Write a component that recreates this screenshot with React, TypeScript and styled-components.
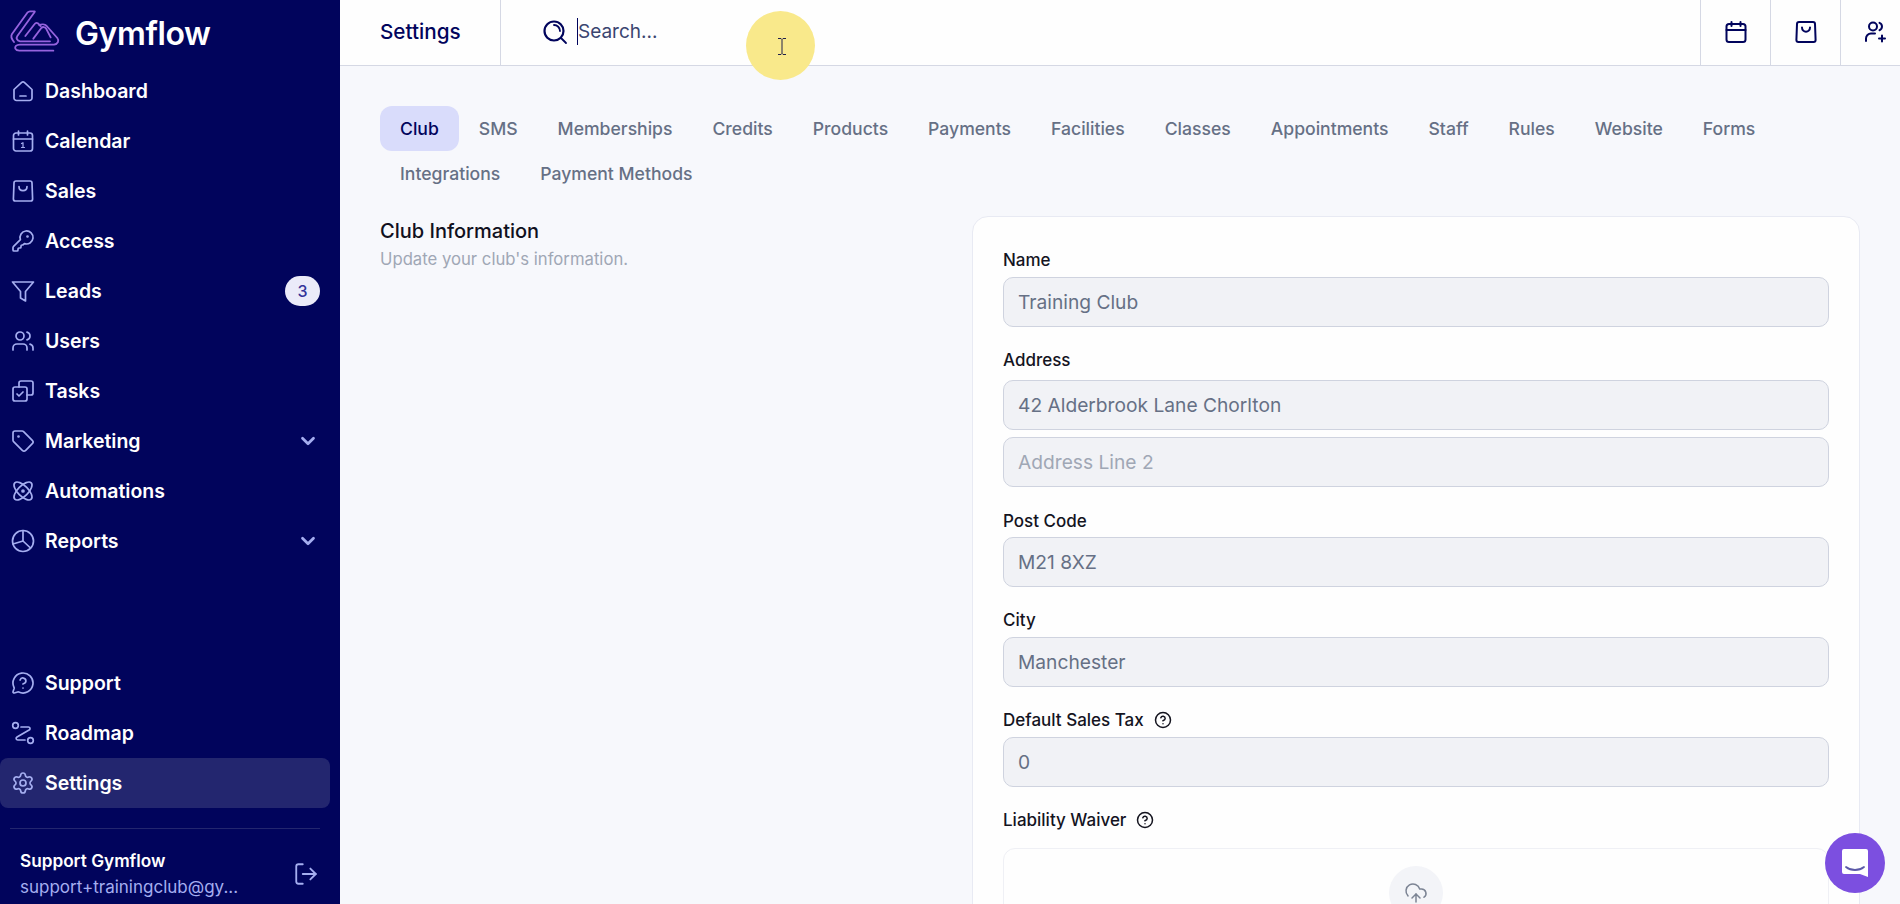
import React, { FC, ReactNode } from 'react'
import styled, { createGlobalStyle } from 'styled-components'
import {
  Atom,
  ChevronDown,
  CircleHelp,
  CloudUpload,
  KeyRound,
  LogOut,
  MessageCircleQuestion,
  Settings,
  Tag,
  Users,
} from 'lucide-react'

const NAVY = '#01045c'
const ICON_BLUE = '#a5aef0'

const GlobalStyle = createGlobalStyle`
  html, body {
    margin: 0;
    height: 100%;
    overflow: hidden;
    background: #f7f8fc;
    font-family: Inter, "Liberation Sans", sans-serif;
  }
  * { box-sizing: border-box; }
`

const Layout = styled.div`
  display: flex;
  width: 1900px;
  height: 904px;
  overflow: hidden;
  position: relative;
`

const Sidebar = styled.aside`
  width: 340px;
  flex-shrink: 0;
  display: flex;
  flex-direction: column;
  background: ${NAVY};
  color: #fff;
`

const Brand = styled.div`
  height: 66px;
  display: flex;
  align-items: center;
  font-size: 32px;
  font-weight: 600;
  letter-spacing: -0.4px;
`

const Nav = styled.nav<{ $grow?: boolean }>`
  width: 330px;
  display: flex;
  flex-direction: column;
  flex: ${props => (props.$grow ? 1 : '0 0 auto')};
`

const NavRow = styled.div<{ $active?: boolean }>`
  height: 50px;
  display: flex;
  align-items: center;
  gap: 10px;
  padding: 0 10px 0 11px;
  border-radius: 8px;
  font-size: 19.5px;
  font-weight: 600;
  background: ${props => (props.$active ? '#23266f' : 'transparent')};
  svg { color: ${ICON_BLUE}; flex-shrink: 0; stroke-width: 1.7; }
`

const NavLabel = styled.span`
  flex: 1;
`

const NavChevron = styled(ChevronDown)`
  margin-right: 1px;
  && { stroke-width: 3; }
`

const Badge = styled.span`
  width: 35px;
  height: 30px;
  border-radius: 15px;
  background: #ebebf9;
  color: #33339a;
  display: flex;
  align-items: center;
  justify-content: center;
  font-size: 16px;
  font-weight: 500;
`

const SidebarFooter = styled.div`
  margin: 20px 20px 0 10px;
  height: 76px;
  border-top: 1px solid #23266f;
  display: flex;
  align-items: center;
  justify-content: space-between;
  padding: 14px 1px 0 10px;
  svg { color: ${ICON_BLUE}; }
`

const UserName = styled.div`
  font-size: 17.2px;
  font-weight: 600;
  line-height: 26px;
`

const UserMail = styled.div`
  font-size: 17px;
  line-height: 26px;
  color: ${ICON_BLUE};
`

const Main = styled.main`
  flex: 1;
  min-width: 0;
  overflow: hidden;
  display: flex;
  flex-direction: column;
`

const TopBar = styled.header`
  width: 1570px;
  height: 66px;
  flex-shrink: 0;
  display: flex;
  align-items: stretch;
  background: #fefefe;
  border-bottom: 1px solid #d5d8e4;
`

const PageTitle = styled.div`
  width: 161px;
  padding: 0 0 2px 40px;
  display: flex;
  align-items: center;
  border-right: 1px solid #d5d8e4;
  font-size: 20.7px;
  font-weight: 500;
  color: ${NAVY};
`

const SearchBox = styled.div`
  flex: 1;
  display: flex;
  align-items: center;
  padding: 0 0 2px 41px;
  color: ${NAVY};
`

const Caret = styled.span`
  width: 1px;
  height: 27px;
  margin-left: 9px;
  background: ${NAVY};
`

const SearchInput = styled.input`
  border: 0;
  outline: 0;
  background: transparent;
  font: 400 19px Inter, "Liberation Sans", sans-serif;
  width: 200px;
  padding: 0;
  &::placeholder { color: #3a4570; opacity: 1; }
`

const TopAction = styled.div`
  width: 70px;
  padding-bottom: 2px;
  display: flex;
  align-items: center;
  justify-content: center;
  border-left: 1px solid #d5d8e4;
  color: ${NAVY};
  svg { stroke-width: 2; }
`

const Content = styled.div`
  flex: 1;
  min-height: 0;
  overflow: hidden;
  padding: 40px 40px 0;
`

const Tabs = styled.div`
  display: flex;
  flex-wrap: wrap;
  width: 1440px;
`

const Tab = styled.div<{ $active?: boolean }>`
  height: 45px;
  padding: 0 20px;
  display: flex;
  align-items: center;
  border-radius: 12px;
  font-size: 17.6px;
  font-weight: 500;
  color: ${props => (props.$active ? NAVY : '#667085')};
  background: ${props => (props.$active ? '#d9dcfb' : 'transparent')};
`

const Section = styled.section`
  display: grid;
  grid-template-columns: 592px 888px;
  margin-top: 20px;
`

const SectionTitle = styled.h2`
  margin: 1px 0 0;
  font-size: 20px;
  line-height: 28px;
  font-weight: 500;
  color: #101020;
`

const SectionNote = styled.p`
  margin: 1px 0 0;
  font-size: 16.7px;
  line-height: 26px;
  color: #a0a7b5;
`

const Card = styled.div`
  height: 720px;
  padding: 32px 30px 0;
  background: #fefefe;
  border: 1px solid #e8eaf3;
  border-radius: 16px;
`

const FieldLabel = styled.div<{ $top: number; $gap: number }>`
  height: 20px;
  margin-top: ${props => props.$top}px;
  margin-bottom: ${props => props.$gap}px;
  display: flex;
  align-items: center;
  gap: 10px;
  font-size: 17px;
  font-weight: 500;
  color: #14141f;
`

const Input = styled.input<{ $spaced?: boolean }>`
  display: block;
  width: 100%;
  height: 50px;
  margin-top: ${props => (props.$spaced ? '7px' : 0)};
  padding: 0 14px;
  border: 1px solid #cfd3df;
  border-radius: 10px;
  outline: 0;
  background: #f1f2f6;
  font: 400 19.2px Inter, "Liberation Sans", sans-serif;
  color: #667085;
  &::placeholder { color: #a0a7b5; opacity: 1; }
`

const DropZone = styled.div`
  height: 120px;
  margin-top: 18px;
  padding-top: 17px;
  display: flex;
  justify-content: center;
  border: 1px solid #eff0f5;
  border-radius: 12px;
`

const UploadCircle = styled.div`
  width: 54px;
  height: 54px;
  border-radius: 50%;
  background: #f3f4f8;
  display: flex;
  align-items: center;
  justify-content: center;
  color: #7c8494;
`

const CursorHighlight = styled.div`
  position: absolute;
  left: 746px;
  top: 11px;
  width: 69px;
  height: 69px;
  border-radius: 50%;
  background: #f9e98b;
  display: flex;
  align-items: center;
  justify-content: center;
  color: #20204a;
  padding-top: 1px;
  padding-left: 3px;
`

const ChatButton = styled.button`
  position: absolute;
  left: 1825px;
  top: 833px;
  width: 60px;
  height: 60px;
  border: 0;
  border-radius: 50%;
  background: #7c4fe0;
  display: flex;
  align-items: center;
  justify-content: center;
  padding: 0;
`

const GymflowLogo: FC = () => (
  <svg width="75" height="66" viewBox="0 0 225 198" fill="none" stroke="#9663de" strokeWidth="5.500" strokeLinecap="round" strokeLinejoin="round">
    <path d="M104 34H90c-4 0-6 2-8 4L36 102c-4 6-2 14 6 24" />
    <path d="M104 36 52 108c-4 6-2 14 8 16h90" />
    <path d="M76 108l28-36c2-3 6-4 10-2l8 8" />
    <path d="M100 116l24-32c4-4 10-4 14 1l14 27" />
    <path d="M118 76c6-4 16-4 22 2l32 36c6 8 2 18-10 20H60c-12 0-16 6-14 12 2 4 6 6 12 6h102" />
  </svg>
)

const HomeIcon: FC = () => (
  <svg width="24" height="24" viewBox="0 0 24 24" fill="none" stroke="currentColor" strokeWidth="1.5" strokeLinecap="round" strokeLinejoin="round">
    <path d="M3 10.500 10.700 3.400a2 2 0 0 1 2.600 0L21 10.500V19a2.500 2.500 0 0 1-2.500 2.500h-13A2.500 2.500 0 0 1 3 19z" />
    <path d="M9 17h6" />
  </svg>
)

const CalendarIcon: FC<{ day?: boolean }> = ({ day }) => (
  <svg width="24" height="24" viewBox="0 0 24 24" fill="none" stroke="currentColor" strokeWidth="1.5" strokeLinecap="round" strokeLinejoin="round">
    <rect x="2.500" y="4" width="19" height="18" rx="2.500" />
    <path d="M2.500 10h19M7.500 2v4M16.500 2v4" />
    {day && <path d="M10.500 14.500l1.500-.8v4.800M10.500 18.500h3" strokeWidth="1.200" />}
  </svg>
)

const BagIcon: FC = () => (
  <svg width="24" height="24" viewBox="0 0 24 24" fill="none" stroke="currentColor" strokeWidth="1.5" strokeLinecap="round" strokeLinejoin="round">
    <path d="M5 2h14a2 2 0 0 1 2 2l.6 16a2 2 0 0 1-2 2H4.400a2 2 0 0 1-2-2L3 4a2 2 0 0 1 2-2z" />
    <path d="M8 7.500c0 5.500 8 5.500 8 0" />
  </svg>
)

const FunnelIcon: FC = () => (
  <svg width="24" height="24" viewBox="0 0 24 24" fill="none" stroke="currentColor" strokeWidth="1.5" strokeLinecap="round" strokeLinejoin="round">
    <path d="M1.500 3h21L14.500 12.500V22l-5-3v-6.500z" />
  </svg>
)

const TasksIcon: FC = () => (
  <svg width="24" height="24" viewBox="0 0 24 24" fill="none" stroke="currentColor" strokeWidth="1.5" strokeLinecap="round" strokeLinejoin="round">
    <path d="M8 8V4a2 2 0 0 1 2-2h10a2 2 0 0 1 2 2v10a2 2 0 0 1-2 2h-4" />
    <rect x="2" y="8" width="14" height="14" rx="2" />
    <path d="M6 15l2 2 4-4" />
  </svg>
)

const PieIcon: FC = () => (
  <svg width="24" height="24" viewBox="0 0 24 24" fill="none" stroke="currentColor" strokeWidth="1.5" strokeLinecap="round" strokeLinejoin="round">
    <circle cx="12" cy="12" r="10.500" />
    <path d="M12 1.500V12l7.500 7" />
    <path d="M12 12 2 15" />
  </svg>
)

const RoadmapIcon: FC = () => (
  <svg width="24" height="24" viewBox="0 0 24 24" fill="none" stroke="currentColor" strokeWidth="1.5" strokeLinecap="round" strokeLinejoin="round">
    <circle cx="4.500" cy="4.500" r="2.800" />
    <circle cx="19.500" cy="19.500" r="2.800" />
    <path d="M10 6h7.500c1.500 0 2 1.800 1 2.800L6 16c-1.500 1-1 3 .8 3H14" />
  </svg>
)

const AddUserIcon: FC = () => (
  <svg width="24" height="24" viewBox="0 0 24 24" fill="none" stroke="currentColor" strokeWidth="2" strokeLinecap="round" strokeLinejoin="round">
    <circle cx="9" cy="6.500" r="4" />
    <path d="M15.500 2.800a4 4 0 0 1 0 7.400" />
    <path d="M2 21v-2.500a5 5 0 0 1 5-5h4" />
    <path d="M18 15.500v6M15 18.500h6" />
  </svg>
)

const SearchIcon: FC = () => (
  <svg width="26" height="26" viewBox="0 0 26 26" fill="none" stroke="currentColor" strokeWidth="2.200" strokeLinecap="round">
    <circle cx="12" cy="12" r="9.500" />
    <path d="M19 19l5 5M12 6a6 6 0 0 1 6 6" strokeWidth="1.800" />
  </svg>
)

const IBeam: FC = () => (
  <svg width="10" height="17" viewBox="0 0 10 17" fill="none" stroke="currentColor" strokeWidth="1">
    <path d="M1 .5h3l1 1 1-1h3M5 1.500v14M1 16.500h3l1-1 1 1h3" />
  </svg>
)

const ChatIcon: FC = () => (
  <svg width="28" height="30" viewBox="0 0 28 30">
    <path d="M3 1h22a2 2 0 0 1 2 2v26l-8-3H3a2 2 0 0 1-2-2V3a2 2 0 0 1 2-2z" fill="#fff" />
    <path d="M5 19c5 4 13 4 18 0" fill="none" stroke="#5c5aa8" strokeWidth="1.800" strokeLinecap="round" />
  </svg>
)

const primaryNav: { label: string; icon: ReactNode; badge?: string; more?: boolean }[] = [
  { label: 'Dashboard', icon: <HomeIcon /> },
  { label: 'Calendar', icon: <CalendarIcon day /> },
  { label: 'Sales', icon: <BagIcon /> },
  { label: 'Access', icon: <KeyRound size={24} /> },
  { label: 'Leads', icon: <FunnelIcon />, badge: '3' },
  { label: 'Users', icon: <Users size={24} /> },
  { label: 'Tasks', icon: <TasksIcon /> },
  { label: 'Marketing', icon: <Tag size={24} />, more: true },
  { label: 'Automations', icon: <Atom size={24} /> },
  { label: 'Reports', icon: <PieIcon />, more: true },
]

const tabs = [
  'Club', 'SMS', 'Memberships', 'Credits', 'Products', 'Payments', 'Facilities', 'Classes',
  'Appointments', 'Staff', 'Rules', 'Website', 'Forms', 'Integrations', 'Payment Methods',
]

const App: FC = () => {
  return (
    <Layout>
      <GlobalStyle />
      <Sidebar>
        <Brand><GymflowLogo />Gymflow</Brand>
        <Nav $grow>
          {primaryNav.map(item => (
            <NavRow key={item.label}>
              {item.icon}
              <NavLabel>{item.label}</NavLabel>
              {item.badge && <Badge>{item.badge}</Badge>}
              {item.more && <NavChevron size={22} />}
            </NavRow>
          ))}
        </Nav>
        <Nav>
          <NavRow><MessageCircleQuestion size={24} /><NavLabel>Support</NavLabel></NavRow>
          <NavRow><RoadmapIcon /><NavLabel>Roadmap</NavLabel></NavRow>
          <NavRow $active><Settings size={24} /><NavLabel>Settings</NavLabel></NavRow>
        </Nav>
        <SidebarFooter>
          <div>
            <UserName>Support Gymflow</UserName>
            <UserMail>support+trainingclub@gy...</UserMail>
          </div>
          <LogOut size={26} strokeWidth={1.7} />
        </SidebarFooter>
      </Sidebar>
      <Main>
        <TopBar>
          <PageTitle>Settings</PageTitle>
          <SearchBox>
            <SearchIcon />
            <Caret />
            <SearchInput placeholder="Search..." />
          </SearchBox>
          <TopAction><CalendarIcon /></TopAction>
          <TopAction><BagIcon /></TopAction>
          <TopAction><AddUserIcon /></TopAction>
        </TopBar>
        <Content>
          <Tabs>
            {tabs.map(tab => (
              <Tab key={tab} $active={tab === 'Club'}>{tab}</Tab>
            ))}
          </Tabs>
          <Section>
            <div>
              <SectionTitle>Club Information</SectionTitle>
              <SectionNote>Update your club's information.</SectionNote>
            </div>
            <Card>
              <FieldLabel $top={1} $gap={7}>Name</FieldLabel>
              <Input readOnly value="Training Club" />
              <FieldLabel $top={23} $gap={10}>Address</FieldLabel>
              <Input readOnly value="42 Alderbrook Lane Chorlton" />
              <Input $spaced readOnly placeholder="Address Line 2" />
              <FieldLabel $top={24} $gap={6}>Post Code</FieldLabel>
              <Input readOnly value="M21 8XZ" />
              <FieldLabel $top={23} $gap={7}>City</FieldLabel>
              <Input readOnly value="Manchester" />
              <FieldLabel $top={23} $gap={7}>Default Sales Tax <CircleHelp size={18} strokeWidth={2} /></FieldLabel>
              <Input readOnly value="0" />
              <FieldLabel $top={23} $gap={0}>Liability Waiver <CircleHelp size={18} strokeWidth={2} /></FieldLabel>
              <DropZone>
                <UploadCircle><CloudUpload size={24} strokeWidth={1.5} /></UploadCircle>
              </DropZone>
            </Card>
          </Section>
        </Content>
      </Main>
      <CursorHighlight><IBeam /></CursorHighlight>
      <ChatButton aria-label="Open chat"><ChatIcon /></ChatButton>
    </Layout>
  )
}

export default App
